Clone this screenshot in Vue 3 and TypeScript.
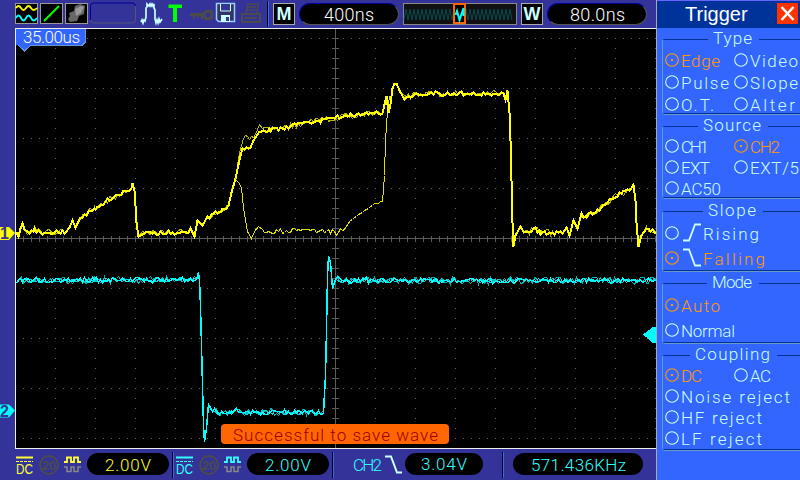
<script setup lang="ts">
interface Option { text: string; width: number; on?: boolean; edge?: 'up' | 'down' }
interface Group { key: string; title: string; titleWidth: number; rows: Option[][] }
type Pt = [number, number]

const groups: Group[] = [
  { key: 'type', title: 'Type', titleWidth: 39, rows: [
    [{ text: 'Edge', width: 39, on: true }, { text: 'Video', width: 48 }],
    [{ text: 'Pulse', width: 48 }, { text: 'Slope', width: 48 }],
    [{ text: 'O.T.', width: 33 }, { text: 'Alter', width: 45 }],
  ] },
  { key: 'source', title: 'Source', titleWidth: 58, rows: [
    [{ text: 'CH1', width: 28 }, { text: 'CH2', width: 30, on: true }],
    [{ text: 'EXT', width: 29 }, { text: 'EXT/5', width: 49 }],
    [{ text: 'AC50', width: 40 }],
  ] },
  { key: 'slope', title: 'Slope', titleWidth: 48, rows: [
    [{ text: 'Rising', width: 56, edge: 'up' }],
    [{ text: 'Falling', width: 62, edge: 'down', on: true }],
  ] },
  { key: 'mode', title: 'Mode', titleWidth: 40, rows: [
    [{ text: 'Auto', width: 39, on: true }],
    [{ text: 'Normal', width: 54 }],
  ] },
  { key: 'coupling', title: 'Coupling', titleWidth: 75, rows: [
    [{ text: 'DC', width: 21, on: true }, { text: 'AC', width: 21 }],
    [{ text: 'Noise reject', width: 109 }],
    [{ text: 'HF reject', width: 81 }],
    [{ text: 'LF reject', width: 81 }],
  ] },
]

/* Samples a polyline every other pixel column and adds ripple where it is not steep. */
function trace(points: Pt[], seed: number, amp: number): string {
  let s = seed
  const rnd = () => { s = (s * 48271) % 2147483647; return s / 2147483647 }
  for (let i = 0; i < 5; i++) rnd()
  const out: string[] = []
  for (let i = 0; i < points.length - 1; i++) {
    const [x0, y0] = points[i]
    const [x1, y1] = points[i + 1]
    const calm = Math.abs((y1 - y0) / (x1 - x0)) < 0.9
    if (!calm) { out.push(`${x0 + 0.5} ${y0 + 0.5}`); continue }
    for (let x = x0; x < x1; x += 2) {
      const y = y0 + ((y1 - y0) * (x - x0)) / (x1 - x0) + (rnd() - 0.5) * 2 * amp
      out.push(`${x + 0.5} ${Math.round(y) + 0.5}`)
    }
  }
  const last = points[points.length - 1]
  out.push(`${last[0] + 0.5} ${last[1] + 0.5}`)
  return 'M' + out.join('L')
}

const head: Pt[] = [[16, 232], [18, 236], [20, 228], [22, 223], [24, 229], [27, 233], [34, 229], [40, 232], [66, 231], [69, 227], [72, 220], [75, 227], [80, 217], [86, 213], [95, 208], [105, 201], [115, 196], [125, 190], [131, 188], [132, 183], [134, 190], [135, 205], [136, 222], [138, 236], [142, 232], [188, 232], [190, 228], [194, 236], [197, 220], [202, 225], [207, 218], [215, 213], [222, 209], [228, 205], [231, 192], [235, 178]]
const tail: Pt[] = [[259, 130], [270, 129], [290, 126], [305, 122], [320, 120], [335, 117], [350, 115], [370, 113], [382, 113], [384, 104], [386, 96], [388, 112], [390, 104], [392, 88], [394, 82], [396, 83], [399, 90], [404, 98], [410, 95], [425, 93], [503, 93], [505, 99], [507, 90], [509, 112], [510, 140], [511, 180], [512, 222], [513, 246], [515, 235], [520, 226], [523, 233], [535, 229], [540, 232], [562, 233], [566, 227], [569, 235], [573, 220], [577, 228], [581, 215], [586, 216], [595, 211], [605, 203], [617, 194], [630, 189], [633, 184], [635, 200], [636, 222], [638, 246], [641, 235], [646, 229], [655, 232]]
const ch1a = trace([...head, [240, 155], [242, 148], [250, 147], [253, 140], ...tail], 11, 2)
const ch1b = trace([...head, [239, 152], [243, 138], [255, 134], [257, 129], [259, 124], [262, 128], ...tail.slice(1)], 7700, 3)
const ch1c = trace([[235, 179], [238, 182], [241, 187], [243, 207], [247, 231], [251, 238], [254, 231], [258, 226], [262, 231], [300, 230], [328, 230], [336, 233], [345, 227]], 512, 2.6) + ' ' +
  trace([[345, 227], [350, 220], [362, 212], [374, 203], [382, 201], [384, 175], [385, 140], [387, 110], [389, 96]], 900, 0.8)

const cyan: Pt[] = [[16, 283], [19, 279], [22, 280], [196, 279], [198, 272], [199, 280], [200, 306], [201, 345], [202, 385], [203, 425], [204, 441], [206, 428], [208, 404], [212, 410], [217, 412], [232, 412], [236, 408], [242, 412], [322, 412], [323, 412], [325, 375], [326, 330], [327, 276], [328, 256], [330, 262], [332, 288], [335, 278], [340, 280], [655, 280]]
const ch2a = trace(cyan, 2100, 2.6)
const ch2b = trace(cyan, 40200, 3.6)
const ch2c = trace(cyan, 90127, 2)

const range = (n: number, start: number, step: number) => Array.from({ length: n }, (_, i) => start + i * step)
const dotRows = range(9, 38, 50)
const dotCols = range(16, 55, 40)
const xTicks = range(80, 23, 8)
const yTicks = range(41, 38, 10)

const miniPath = 'M1 17' + range(54, 3, 2).map((x, i) => `L${x} ${i % 2 ? 17 : 6}`).join('')
</script>

<template>
  <div class="screen">
    <div class="scope">
      <header class="topbar">
        <svg class="topicons" width="252" height="28" viewBox="15 0 252 28">
          <g fill="#000" stroke="#999">
            <rect x="15.5" y="3.5" width="22" height="20" />
            <rect x="40.5" y="3.5" width="22" height="20" />
            <rect x="65.5" y="3.5" width="22" height="20" />
          </g>
          <g fill="none" stroke-width="1.8">
            <path d="M16 8q2.500-4 5 0t5 0 5 0 6 0" stroke="#ff0" />
            <path d="M16 18q2.500-5 5 0t5 0 5 0 6 0" stroke="#0ff" />
            <path d="M44 21L59 6" stroke="#0f0" stroke-width="2" />
          </g>
          <path d="M69 13l5-2 1-5 5-2 5 2-1 8-5 2-2 5-7 1-2-3 2-3z" fill="#666" />
          <path d="M75 9l6-3 3 1-3 6-5 3z" fill="#999" />
          <path d="M90.500 20V6q0-3 3-3h39" fill="none" stroke="#009" />
          <path d="M135.500 6v14q0 3-3 3h-39q-3 0-3-3" fill="none" stroke="#555577" />
          <path d="M132 3q3.500 0 3.500 3" fill="none" stroke="#009" />
          <path d="M141 22l1-2 1 3 1-3 1 1 1-4V8l1-1V4l2 2 1-2 1 2 1-2 1 2 1-2v4l1 2v9l1 4 1-3 1 3 1-4 1 3 2-3" fill="none" stroke="#cff" stroke-width="1.700" />
          <path d="M168.500 4.500H182V8h-5v14h-4V8h-4.500z" fill="#0f0" />
          <g fill="none" stroke="#4b4b4b">
            <circle cx="208" cy="15" r="4" stroke-width="3" />
            <path d="M190 14.500h14" stroke-width="3" />
            <path d="M194 15v4M198 15v3M202 14v5M212 10v9" stroke-width="2" />
          </g>
          <g>
            <path d="M216.500 3.500h18v18h-16l-2-2z" fill="#336" stroke="#9cf" stroke-width="1.500" />
            <path d="M220.500 4v7h10V4" fill="#339" stroke="#cff" />
            <path d="M221 22v-7h9v7z" fill="#cff" />
            <path d="M226 17h3v4h-3z" fill="#339" />
          </g>
          <g fill="none" stroke="#4b4b4b" stroke-width="1.500">
            <path d="M246 13l2-9h10l-1 9M248 7h8M247 10h8" />
            <path d="M242 14h18v8h-18zM244 18h13" stroke-width="2" />
          </g>
        </svg>
        <i class="sep" />
        <b class="letter">M</b>
        <div class="pill bevel timebase"><svg width="54" height="20"><text x="2" y="16.500" textLength="50">400ns</text></svg></div>
        <svg class="mini" width="114" height="22">
          <rect x="0.500" y="0.500" width="113" height="21" fill="#111" stroke="#888" />
          <path :d="miniPath" fill="none" stroke="#064a50" />
          <rect x="51" y="1" width="11" height="19" fill="#000" stroke="#f60" stroke-width="2" />
          <path d="M52.500 12l1.500-4 2.500 9 4-12v8" fill="none" stroke="#0ff" stroke-width="2" />
        </svg>
        <b class="letter">W</b>
        <div class="pill bevel window"><svg width="58" height="20"><text x="2" y="16.500" textLength="55">80.0ns</text></svg></div>
      </header>

      <main class="middle">
        <aside class="gutter">
          <svg width="15" height="421" viewBox="0 28 15 421">
            <path d="M0 227h9l6 6-6 7H0z" fill="#ff0" />
            <path d="M0 404.500h9l6 6-6 7H0z" fill="#0ff" />
            <text class="mark" x="0" y="239">1</text>
            <text class="mark" x="0" y="416.500">2</text>
          </svg>
        </aside>
        <div class="plot">
          <svg width="640" height="419" viewBox="16 29 640 419" shape-rendering="crispEdges">
            <g fill="none" stroke="#666">
              <path v-for="y in dotRows" :key="'r' + y" :d="`M23 ${y + 0.5}H656`" stroke-dasharray="1 7" />
              <path v-for="x in dotCols" :key="'c' + x" :d="`M${x + 0.5} 38V439`" stroke-dasharray="1 9" />
              <path d="M16 238.500H656M335.500 29V448" stroke="#5c5c5c" />
              <path v-for="x in xTicks" :key="'x' + x" :d="`M${x + 0.5} 236V242`" stroke="#5c5c5c" />
              <path v-for="y in yTicks" :key="'y' + y" :d="`M332 ${y + 0.5}H339`" stroke="#5c5c5c" />
            </g>
            <g fill="none" stroke-width="1">
              <path :d="ch1b" stroke="#b3b300" />
              <path :d="ch1c" stroke="#e0e000" />
              <path :d="ch1a" stroke="#ff0" stroke-width="2" />
              <path :d="ch2b" stroke="#00b4ba" />
              <path :d="ch2c" stroke="#00d8dc" />
              <path :d="ch2a" stroke="#0ff" stroke-width="1.500" />
            </g>
            <path d="M643 334.500L653 327h3v16h-3z" fill="#0ff" />
            <path d="M16 29h70v13l-3 3H31l-6.500 6.500L18 45h-2z" fill="#36f" />
            <path d="M85.500 29v13l-3 3H31l-6.500 6L18 45" fill="none" stroke="#69c" />
          </svg>
          <div class="offset"><svg width="66" height="18"><text x="1" y="14" textLength="57">35.00us</text></svg></div>
          <div class="toast"><svg width="208" height="20"><text x="2" y="16.500" textLength="205">Successful to save wave</text></svg></div>
        </div>
      </main>

      <footer class="bottombar">
        <div class="channel yellow">
          <svg class="flags" width="72" height="26" viewBox="15 452 72 26">
            <path d="M16 457.500h17" stroke="currentColor" stroke-width="2" />
            <path d="M16 461.500h17" stroke="currentColor" stroke-dasharray="3 1" />
            <text x="16" y="473.500" class="dc" textLength="17" lengthAdjust="spacingAndGlyphs">DC</text>
            <circle cx="49" cy="465" r="9" fill="none" stroke="#4b4b4b" stroke-width="2" />
            <text x="42" y="470" class="bw" textLength="14">20</text>
            <path d="M64 462h3v-4.500h4v4.500h3v-4.500h4v4.500h3" fill="none" stroke="currentColor" stroke-width="1.800" />
            <path d="M64 467h3v4.500h4V467h3v4.500h4V467h3" fill="none" stroke="#888" stroke-width="1.500" />
          </svg>
          <div class="pill volts"><svg width="50" height="20"><text x="2" y="16.500" textLength="46">2.00V</text></svg></div>
        </div>
        <i class="sep" />
        <div class="channel cyan">
          <svg class="flags" width="72" height="26" viewBox="15 452 72 26">
            <path d="M16 457.500h17" stroke="currentColor" stroke-width="2" />
            <path d="M16 461.500h17" stroke="currentColor" stroke-dasharray="3 1" />
            <text x="16" y="473.500" class="dc" textLength="17" lengthAdjust="spacingAndGlyphs">DC</text>
            <circle cx="49" cy="465" r="9" fill="none" stroke="#4b4b4b" stroke-width="2" />
            <text x="42" y="470" class="bw" textLength="14">20</text>
            <path d="M64 462h3v-4.500h4v4.500h3v-4.500h4v4.500h3" fill="none" stroke="currentColor" stroke-width="1.800" />
            <path d="M64 467h3v4.500h4V467h3v4.500h4V467h3" fill="none" stroke="#888" stroke-width="1.500" />
          </svg>
          <div class="pill volts"><svg width="50" height="20"><text x="2" y="16.500" textLength="46">2.00V</text></svg></div>
        </div>
        <i class="sep" />
        <div class="trigger cyan">
          <svg width="53" height="26" viewBox="352 452 53 26">
            <text x="353" y="470.500" textLength="29">CH2</text>
            <path d="M385 456.500h6l6 16h5" fill="none" stroke="#cff" stroke-width="2" />
          </svg>
          <div class="pill level"><svg width="50" height="20"><text x="2" y="16" textLength="46">3.04V</text></svg></div>
        </div>
        <i class="sep" />
        <div class="pill freq cyan"><svg width="98" height="20"><text x="2" y="16.500" textLength="95">571.436KHz</text></svg></div>
      </footer>
    </div>

    <aside class="panel">
      <header class="title">
        <span>Trigger</span>
        <svg width="21" height="21"><rect width="21" height="21" fill="#f30" /><path d="M4.500 4l12 13M16.500 4l-12 13" stroke="#fff" stroke-width="2.500" /></svg>
      </header>
      <fieldset v-for="g in groups" :key="g.key" :class="['group', g.key]">
        <legend><svg :width="g.titleWidth + 2" height="18"><text x="0" y="15" :textLength="g.titleWidth">{{ g.title }}</text></svg></legend>
        <div v-for="(row, i) in g.rows" :key="i" class="row">
          <div v-for="o in row" :key="o.text" :class="['option', { on: o.on }]">
            <svg class="radio" width="14" height="14">
              <circle cx="7" cy="7" r="6.300" fill="none" stroke="currentColor" stroke-width="1.100" />
              <rect v-if="o.on" x="6" y="6" width="2" height="2" fill="currentColor" />
            </svg>
            <svg v-if="o.edge" class="edge" width="18" height="20">
              <path :d="o.edge === 'up' ? 'M0 17.500h6L12 1.500h6' : 'M0 1.500h6L12 17.500h6'" fill="none" stroke="#cff" stroke-width="1.800" />
            </svg>
            <svg class="label" :width="o.width + 1" height="22"><text x="0" y="17.500" :textLength="o.width">{{ o.text }}</text></svg>
          </div>
        </div>
      </fieldset>
    </aside>
  </div>
</template>

<style>
body { background: #333399; }
</style>

<style scoped>
.screen { display: flex; width: 800px; height: 480px; overflow: hidden; background: #333399; font-family: Roboto, "Liberation Sans", sans-serif; font-weight: 300; font-size: 17px; }
svg { display: block; flex: none; }
text { fill: currentColor; }
.scope { display: flex; flex-direction: column; width: 656px; flex: none; }
.topbar { display: flex; align-items: flex-start; height: 28px; color: #fff; font-size: 18px; }
.topicons { margin-left: 15px; }
.sep { width: 1px; height: 26px; flex: none; background: #000; border-right: 1px solid #36f; margin-top: 1px; }
.letter { box-sizing: border-box; width: 22px; height: 22px; margin-top: 3px; border: 1px solid #aaa; background: #000; color: #cff; font: 700 18px/20px "Liberation Sans", sans-serif; display: flex; justify-content: center; }
.topbar .sep + .letter { margin-left: 4px; }
.pill { box-sizing: border-box; height: 22px; border-radius: 11px; background: #000; display: flex; align-items: center; justify-content: center; }
.bevel { margin-top: 3px; border: 1px solid; border-color: #009 #555 #555 #009; }
.timebase { width: 100px; margin-left: 4px; }
.window { width: 100px; margin-left: 4px; }
.mini { margin: 3px 4px 0; }
.middle { display: flex; height: 421px; }
.gutter { width: 15px; }
.mark { fill: #333399; font: 700 16px "Liberation Sans", sans-serif; }
.plot { position: relative; box-sizing: border-box; width: 641px; height: 421px; background: #000; border: solid #eee; border-width: 1px 0 1px 1px; }
.offset { position: absolute; left: 6px; top: 0; color: #fff; }
.toast { position: absolute; left: 205px; top: 395px; width: 228px; height: 20px; border-radius: 4px; background: #f60; color: #900; display: flex; align-items: center; justify-content: center; }
.bottombar { display: flex; align-items: flex-start; height: 31px; padding-left: 15px; }
.bottombar .pill { margin-top: 4px; }
.bottombar .sep { margin-top: 3px; }
.channel { display: flex; width: 157px; }
.channel + .sep + .channel { width: 158px; padding-left: 1px; box-sizing: border-box; }
.flags { margin-top: 3px; }
.yellow { color: #ff3; }
.cyan { color: #3ff; }
.volts { width: 82px; }
.dc { font: 400 14px "Liberation Sans", sans-serif; }
.bw { fill: #4b4b4b; font: 700 13px "Liberation Sans", sans-serif; }
.trigger { display: flex; width: 168px; padding-left: 18px; box-sizing: border-box; }
.trigger > svg { margin-top: 3px; }
.level { width: 78px; }
.freq { width: 130px; margin-left: 9px; }
.panel { box-sizing: border-box; width: 144px; flex: none; background: #36f; border-left: 1px solid #aaa; color: #cff; overflow: hidden; }
.title { box-sizing: border-box; height: 28px; background: #039; border-top: 1px solid #66f; display: flex; color: #fff; font: 400 20px/26px "Liberation Sans", sans-serif; padding: 0 2px 0 28px; justify-content: space-between; }
.title svg { margin-top: 2px; }
.group { box-sizing: border-box; width: 142px; margin: 0 0 0 5px; padding: 0; min-width: 0; border: 1px solid #69c; border-top-color: #039; border-bottom-color: #039; border-radius: 3px; box-shadow: 0 1px 0 #69c; }
.group legend { padding: 0 5px; margin: 0 auto; height: 16px; }
.group legend svg { margin-top: -2px; }
.row { display: flex; height: 21px; align-items: center; }
.option { display: flex; align-items: center; width: 69px; flex: none; padding-left: 2px; box-sizing: border-box; }
.on { color: #f90; }
.label { margin-left: 2px; }
.edge { margin-left: 4px; }
.type { height: 83px; margin-top: 3px; padding-top: 2px; }
.type .row { height: 22px; }
.source { height: 80px; margin-top: 4px; padding-top: 1px; }
.slope { height: 68px; margin-top: 5px; padding-top: 1px; }
.mode { height: 68px; margin-top: 4px; padding-top: 1px; }
.slope .row, .mode .row { height: 25px; }
.coupling { height: 103px; margin-top: 4px; padding-top: 1px; }
</style>
